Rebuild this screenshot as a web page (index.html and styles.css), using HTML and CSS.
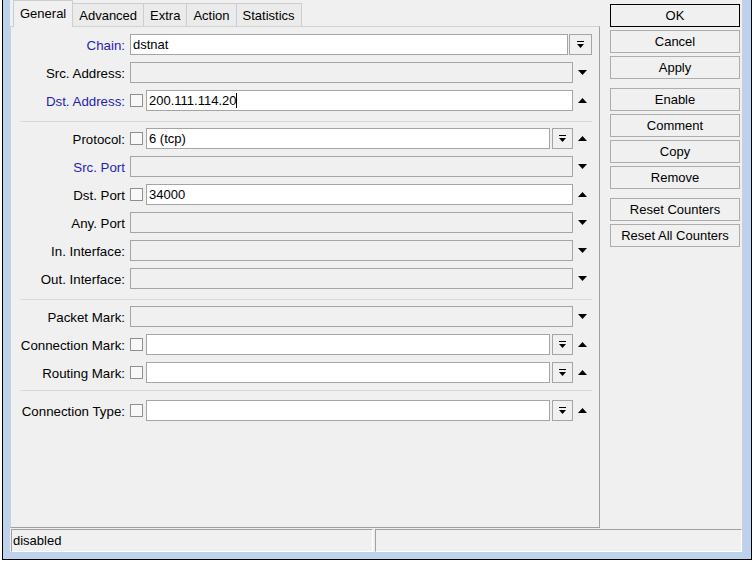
FILE: index.html
```html
<!DOCTYPE html>
<html lang="en">
<head>
    <meta charset="UTF-8">
    <title>NAT Rule</title>
    <link rel="stylesheet" href="styles.css">
</head>
<body>

<div class="window">
    <div class="client">
        <div class="main">
            <div class="editor">
                <div class="tabs">
                    <span class="tab active">General</span>
                    <span class="tab">Advanced</span>
                    <span class="tab">Extra</span>
                    <span class="tab">Action</span>
                    <span class="tab">Statistics</span>
                </div>

                <div class="panel">
                    <div class="row">
                        <span class="label blue">Chain:</span>
                        <div class="field">
                            <div class="box">dstnat</div>
                            <span class="drop wide"><svg width="7" height="8" viewBox="0 0 7 8"><path d="M0 0h7v1H0zM0 3h7L3.5 7z"/></svg></span>
                        </div>
                    </div>
                    <div class="row">
                        <span class="label">Src. Address:</span>
                        <div class="field"><div class="box off"></div></div>
                        <span class="spin"><svg width="9" height="5" viewBox="0 0 9 5"><path d="M0 0h9L4.5 5z"/></svg></span>
                    </div>
                    <div class="row">
                        <span class="label blue">Dst. Address:</span>
                        <div class="field">
                            <span class="check"></span>
                            <div class="box">200.111.114.20<span class="caret"></span></div>
                        </div>
                        <span class="spin"><svg width="9" height="5" viewBox="0 0 9 5"><path d="M4.5 0L9 5H0z"/></svg></span>
                    </div>

                    <div class="sep"></div>

                    <div class="row">
                        <span class="label">Protocol:</span>
                        <div class="field">
                            <span class="check"></span>
                            <div class="box">6 (tcp)</div>
                            <span class="drop"><svg width="7" height="8" viewBox="0 0 7 8"><path d="M0 0h7v1H0zM0 3h7L3.5 7z"/></svg></span>
                        </div>
                        <span class="spin"><svg width="9" height="5" viewBox="0 0 9 5"><path d="M4.5 0L9 5H0z"/></svg></span>
                    </div>
                    <div class="row">
                        <span class="label blue">Src. Port</span>
                        <div class="field"><div class="box off"></div></div>
                        <span class="spin"><svg width="9" height="5" viewBox="0 0 9 5"><path d="M0 0h9L4.5 5z"/></svg></span>
                    </div>
                    <div class="row">
                        <span class="label">Dst. Port</span>
                        <div class="field">
                            <span class="check"></span>
                            <div class="box">34000</div>
                        </div>
                        <span class="spin"><svg width="9" height="5" viewBox="0 0 9 5"><path d="M4.5 0L9 5H0z"/></svg></span>
                    </div>
                    <div class="row">
                        <span class="label">Any. Port</span>
                        <div class="field"><div class="box off"></div></div>
                        <span class="spin"><svg width="9" height="5" viewBox="0 0 9 5"><path d="M0 0h9L4.5 5z"/></svg></span>
                    </div>
                    <div class="row">
                        <span class="label">In. Interface:</span>
                        <div class="field"><div class="box off"></div></div>
                        <span class="spin"><svg width="9" height="5" viewBox="0 0 9 5"><path d="M0 0h9L4.5 5z"/></svg></span>
                    </div>
                    <div class="row">
                        <span class="label">Out. Interface:</span>
                        <div class="field"><div class="box off"></div></div>
                        <span class="spin"><svg width="9" height="5" viewBox="0 0 9 5"><path d="M0 0h9L4.5 5z"/></svg></span>
                    </div>

                    <div class="sep"></div>

                    <div class="row">
                        <span class="label">Packet Mark:</span>
                        <div class="field"><div class="box off"></div></div>
                        <span class="spin"><svg width="9" height="5" viewBox="0 0 9 5"><path d="M0 0h9L4.5 5z"/></svg></span>
                    </div>
                    <div class="row">
                        <span class="label">Connection Mark:</span>
                        <div class="field">
                            <span class="check"></span>
                            <div class="box"></div>
                            <span class="drop"><svg width="7" height="8" viewBox="0 0 7 8"><path d="M0 0h7v1H0zM0 3h7L3.5 7z"/></svg></span>
                        </div>
                        <span class="spin"><svg width="9" height="5" viewBox="0 0 9 5"><path d="M4.5 0L9 5H0z"/></svg></span>
                    </div>
                    <div class="row">
                        <span class="label">Routing Mark:</span>
                        <div class="field">
                            <span class="check"></span>
                            <div class="box"></div>
                            <span class="drop"><svg width="7" height="8" viewBox="0 0 7 8"><path d="M0 0h7v1H0zM0 3h7L3.5 7z"/></svg></span>
                        </div>
                        <span class="spin"><svg width="9" height="5" viewBox="0 0 9 5"><path d="M4.5 0L9 5H0z"/></svg></span>
                    </div>

                    <div class="sep last"></div>

                    <div class="row">
                        <span class="label">Connection Type:</span>
                        <div class="field">
                            <span class="check"></span>
                            <div class="box"></div>
                            <span class="drop"><svg width="7" height="8" viewBox="0 0 7 8"><path d="M0 0h7v1H0zM0 3h7L3.5 7z"/></svg></span>
                        </div>
                        <span class="spin"><svg width="9" height="5" viewBox="0 0 9 5"><path d="M4.5 0L9 5H0z"/></svg></span>
                    </div>
                </div>
            </div>

            <div class="actions">
                <button class="btn default">OK</button>
                <button class="btn">Cancel</button>
                <button class="btn">Apply</button>
                <button class="btn group">Enable</button>
                <button class="btn">Comment</button>
                <button class="btn">Copy</button>
                <button class="btn">Remove</button>
                <button class="btn group">Reset Counters</button>
                <button class="btn">Reset All Counters</button>
            </div>
        </div>

        <div class="status">
            <div class="cell">disabled</div>
            <div class="cell wide"></div>
        </div>
    </div>
</div>

</body>
</html>
```

FILE: styles.css
```css
body {
    margin: 0;
    background: #fff;
    font-family: "Liberation Sans", Arial, sans-serif;
    font-size: 13px;
    color: #000;
}

/* window frame */
.window {
    margin-left: 2px;
    width: 750px;
    box-sizing: border-box;
    border: 1px solid #000;
    border-top: 0;
    padding: 0 9px 7px 7px;
    background: #bcd3eb;
}
.client {
    height: 552px;
    background: #f0f0f0;
    display: flex;
    flex-direction: column;
}
.main {
    display: flex;
    height: 529px;
}
.editor {
    width: 590px;
    display: flex;
    flex-direction: column;
}

/* tabs */
.tabs {
    display: flex;
    align-items: flex-end;
    height: 26px;
    padding-left: 3px;
}
.tab {
    height: 23px;
    box-sizing: border-box;
    padding: 1px 6px 0;
    line-height: 21px;
    border: 1px solid #cdcdcd;
    border-bottom: 0;
    background: #ebebeb;
    margin-left: -1px;
}
.tab:first-child {
    margin-left: 0;
}
.tab.active {
    position: relative;
    height: 27px;
    margin-bottom: -1px;
    padding-top: 0;
    line-height: 25px;
    background: #f0f0f0;
}

/* form panel */
.panel {
    height: 502px;
    box-sizing: border-box;
    display: flex;
    flex-direction: column;
    border: 1px solid #a0a0a0;
    border-top-color: #d2d2d2;
    border-left-color: #d2d2d2;
    padding: 7px 7px 0 0;
}
.row {
    display: flex;
    align-items: center;
    flex-shrink: 0;
    height: 21px;
    margin-bottom: 7px;
}
.label {
    width: 114px;
    margin-right: 5px;
    padding-top: 1px;
    font-size: 13.3px;
    text-align: right;
    white-space: nowrap;
}
.label.blue {
    color: #1f1fb0;
}
.field {
    flex: 1;
    display: flex;
    align-items: center;
    height: 21px;
}
.box {
    flex: 1;
    height: 21px;
    box-sizing: border-box;
    border: 1px solid #a5a5a5;
    background: #fff;
    padding: 1px 2px 0;
    line-height: 18px;
    white-space: nowrap;
}
.box.off {
    background: #f0f0f0;
}
.caret {
    display: inline-block;
    width: 1px;
    height: 15px;
    background: #000;
    vertical-align: -3px;
}
.check {
    width: 13px;
    height: 13px;
    box-sizing: border-box;
    border: 1px solid #8f8f8f;
    background: #f8f8f8;
    margin-right: 3px;
}
.drop {
    width: 21px;
    height: 21px;
    box-sizing: border-box;
    margin-left: 2px;
    border: 1px solid #a5a5a5;
    background: #f0f0f0;
    display: flex;
    align-items: center;
    justify-content: center;
}
.drop.wide {
    width: 23px;
    margin-left: 1px;
}
.spin {
    width: 19px;
    display: flex;
    justify-content: center;
}
.sep {
    flex-shrink: 0;
    height: 1px;
    background: #d9d9d9;
    margin: 3px 0 6px 9px;
}
.sep.last {
    margin: 0 0 9px 9px;
}

/* command buttons */
.actions {
    width: 130px;
    margin-left: 10px;
    padding-top: 4px;
    display: flex;
    flex-direction: column;
    gap: 3px;
}
.btn {
    height: 23px;
    box-sizing: border-box;
    padding: 0;
    border: 1px solid #adadad;
    background: #f0f0f0;
    font: inherit;
    color: #000;
    text-align: center;
}
.btn.default {
    border-color: #000;
}
.btn.group {
    margin-top: 6px;
}

/* status bar */
.status {
    display: flex;
    gap: 2px;
    padding-left: 1px;
}
.cell {
    width: 362px;
    height: 23px;
    box-sizing: border-box;
    border: 1px solid;
    border-color: #a0a0a0 #fff #fff #a0a0a0;
    padding: 1px 1px 0;
    line-height: 20px;
}
.cell.wide {
    width: 367px;
}
```
